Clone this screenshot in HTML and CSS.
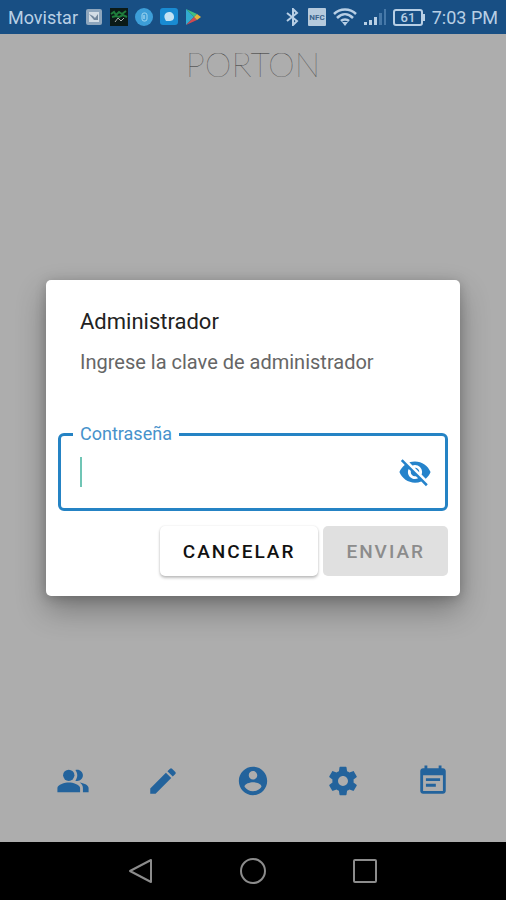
FILE: index.html
```html
<!DOCTYPE html>
<html lang="es">
<head>
  <meta charset="UTF-8" />
  <meta name="viewport" content="width=device-width, initial-scale=1.0" />
  <title>Porton</title>
  <link rel="stylesheet" href="styles.css">
</head>
<body>
  <header class="status-bar">
    <div class="status-left">
      <span>Movistar</span>
      <svg width="18" height="18" viewBox="0 0 18 18" aria-hidden="true">
        <rect x="1" y="1" width="16" height="16" rx="2" fill="#8ea6bd"/>
        <rect x="4" y="4" width="10" height="10" fill="#d3dde6"/>
        <path d="M4 6l4 2 2 2 3-4v6H9z" fill="#71879d"/>
      </svg>
      <svg width="18" height="18" viewBox="0 0 18 18" aria-hidden="true">
        <rect width="18" height="18" fill="#0b1a17"/>
        <path d="M1 6l3-2 2 3 3-3 3 2 4-3M2 9l4-1 3 1 4-2 4 2" fill="none" stroke="#1f7d3b" stroke-width="2"/>
        <path d="M5 14l3-4 3 3 3-3" fill="none" stroke="#a9adaa" stroke-width="1"/>
      </svg>
      <svg width="18" height="18" viewBox="0 0 18 18" aria-hidden="true">
        <circle cx="9" cy="9" r="9" fill="#3d9ed8"/>
        <rect x="7" y="5" width="5" height="8" rx="2" fill="none" stroke="#9ed5ef" stroke-width="1"/>
        <path d="M9 7v4" stroke="#c5e6f5"/>
      </svg>
      <svg width="18" height="18" viewBox="0 0 18 18" aria-hidden="true">
        <rect width="18" height="17" rx="3" fill="#198bd2"/>
        <path d="M9 4c3 0 5 2 5 5s-2 4-5 4H6l-1-2c-2-4 1-7 4-7z" fill="#c3e3f4"/>
      </svg>
      <svg width="18" height="18" viewBox="0 0 18 18" aria-hidden="true">
        <path d="M1 1v16l8-8z" fill="#32acd0"/>
        <path d="M1 1l8 8 3-3z" fill="#3fbf83"/>
        <path d="M1 17l8-8 3 3z" fill="#cf4a50"/>
        <path d="M12 6l4 3-4 3-3-3z" fill="#e2b43c"/>
      </svg>
    </div>
    <div class="status-right">
      <svg width="16" height="18" viewBox="0 0 16 18" aria-hidden="true">
        <path d="M2 5l10 8-4 4V1l4 4-10 8" fill="none" stroke="currentColor" stroke-width="2"/>
      </svg>
      <svg width="18" height="18" viewBox="0 0 18 18" aria-hidden="true">
        <rect width="18" height="18" rx="1" fill="#b5cadd"/>
        <text x="9" y="12" text-anchor="middle" class="nfc-text">NFC</text>
      </svg>
      <svg width="24" height="18" viewBox="0 0 24 18" aria-hidden="true">
        <path d="M1 6c6-6 16-6 22 0M4 10c5-5 11-5 16 0M8 13c2-2 6-2 8 0" fill="none" stroke="currentColor" stroke-width="2.500"/>
        <path d="M9 14h6l-3 4z" fill="currentColor"/>
      </svg>
      <svg width="22" height="18" viewBox="0 0 22 18" aria-hidden="true">
        <path d="M0 14h3v3H0zM5 12h3v5H5zM10 9h3v8h-3z" fill="currentColor"/>
        <path d="M15 5h3v12h-3zM20 1h2v16h-2z" fill="#4678a8"/>
      </svg>
      <svg width="32" height="18" viewBox="0 0 32 18" aria-hidden="true">
        <rect x="1" y="2" width="28" height="15" rx="2" fill="none" stroke="currentColor" stroke-width="2"/>
        <path d="M30 6h2v7h-2z" fill="currentColor"/>
        <text x="15" y="14" text-anchor="middle" class="battery-text">61</text>
      </svg>
      <span>7:03 PM</span>
    </div>
  </header>

  <main class="app">
    <h1 class="app-title">PORTON</h1>

    <nav class="tabs">
      <a href="#usuarios" aria-label="Usuarios">
        <svg viewBox="0 0 24 24">
          <path d="M16.67 13.13C18.04 14.06 19 15.32 19 17v3h4v-3c0-2.18-3.57-3.47-6.33-3.87z"/>
          <circle cx="9" cy="8" r="4"/>
          <path d="M15 12c2.21 0 4-1.79 4-4s-1.79-4-4-4c-.47 0-.91.1-1.33.24C14.5 5.27 15 6.58 15 8s-.5 2.73-1.33 3.76c.42.14.86.24 1.33.24zM9 13c-2.67 0-8 1.34-8 4v3h16v-3c0-2.66-5.33-4-8-4z"/>
        </svg>
      </a>
      <a href="#editar" aria-label="Editar">
        <svg viewBox="0 0 24 24">
          <path d="M3 17.25V21h3.75L17.81 9.94l-3.75-3.75L3 17.25zM20.71 7.04a1 1 0 0 0 0-1.41l-2.34-2.34a1 1 0 0 0-1.41 0l-1.83 1.83 3.75 3.75 1.83-1.83z"/>
        </svg>
      </a>
      <a href="#cuenta" aria-label="Cuenta">
        <svg viewBox="0 0 24 24">
          <path d="M12 2C6.48 2 2 6.48 2 12s4.48 10 10 10 10-4.48 10-10S17.52 2 12 2zm0 3c1.66 0 3 1.34 3 3s-1.34 3-3 3-3-1.34-3-3 1.34-3 3-3zm0 14.2c-2.5 0-4.71-1.28-6-3.22.03-1.99 4-3.08 6-3.08 1.99 0 5.97 1.09 6 3.08-1.29 1.94-3.5 3.22-6 3.22z"/>
        </svg>
      </a>
      <a href="#ajustes" aria-label="Ajustes">
        <svg viewBox="0 0 24 24">
          <path d="M19.43 12.98c.04-.32.07-.64.07-.98s-.03-.66-.07-.98l2.11-1.65c.19-.15.24-.42.12-.64l-2-3.46c-.12-.22-.39-.3-.61-.22l-2.49 1c-.52-.4-1.08-.73-1.69-.98l-.38-2.65C14.46 2.18 14.25 2 14 2h-4c-.25 0-.46.18-.49.42l-.38 2.65c-.61.25-1.17.59-1.69.98l-2.49-1c-.23-.09-.49 0-.61.22l-2 3.46c-.13.22-.07.49.12.64l2.11 1.65c-.04.32-.07.65-.07.98s.03.66.07.98l-2.11 1.65c-.19.15-.24.42-.12.64l2 3.46c.12.22.39.3.61.22l2.49-1c.52.4 1.08.73 1.69.98l.38 2.65c.03.24.24.42.49.42h4c.25 0 .46-.18.49-.42l.38-2.65c.61-.25 1.17-.59 1.69-.98l2.49 1c.23.09.49 0 .61-.22l2-3.46c.12-.22.07-.49-.12-.64l-2.11-1.65zM12 15.5c-1.93 0-3.5-1.57-3.5-3.5s1.57-3.5 3.5-3.5 3.5 1.57 3.5 3.5-1.57 3.5-3.5 3.5z"/>
        </svg>
      </a>
      <a href="#eventos" aria-label="Eventos">
        <svg viewBox="0 0 24 24">
          <path d="M17 10H7v2h10v-2zm2-7h-1V1h-2v2H8V1H6v2H5c-1.110 0-1.990.9-1.990 2L3 19c0 1.100.89 2 2 2h14c1.100 0 2-.9 2-2V5c0-1.100-.9-2-2-2zm0 16H5V8h14v11zm-5-5H7v2h7v-2z"/>
        </svg>
      </a>
    </nav>

    <div class="overlay">
      <form class="dialog" role="dialog" aria-labelledby="dialogTitle">
        <h2 id="dialogTitle">Administrador</h2>
        <p>Ingrese la clave de administrador</p>
        <fieldset class="field">
          <legend><label for="password">Contraseña</label></legend>
          <div class="field-row">
            <span class="caret"></span>
            <input type="password" id="password" autocomplete="off" />
            <button type="button" class="toggle" aria-label="Mostrar contraseña">
              <svg viewBox="0 0 24 24">
                <path d="M12 7c2.760 0 5 2.240 5 5 0 .65-.13 1.260-.36 1.830l2.920 2.920c1.510-1.260 2.700-2.890 3.430-4.750-1.730-4.390-6-7.500-11-7.500-1.400 0-2.740.25-3.980.7l2.160 2.160C10.740 7.130 11.350 7 12 7zM2 4.270l2.280 2.280.46.46C3.080 8.300 1.780 10.020 1 12c1.730 4.390 6 7.500 11 7.500 1.550 0 3.030-.3 4.380-.84l.42.42L19.730 22 21 20.730 3.270 3 2 4.270zM7.530 9.800l1.550 1.550c-.05.21-.08.43-.08.65 0 1.660 1.340 3 3 3 .22 0 .44-.03.65-.08l1.550 1.550c-.67.33-1.410.53-2.200.53-2.760 0-5-2.240-5-5 0-.79.2-1.530.53-2.200zm4.310-.78l3.150 3.150.02-.16c0-1.660-1.340-3-3-3l-.17.01z"/>
              </svg>
            </button>
          </div>
        </fieldset>
        <div class="actions">
          <button type="button" class="button">CANCELAR</button>
          <button type="submit" class="button" disabled>ENVIAR</button>
        </div>
      </form>
    </div>
  </main>

  <footer class="system-nav">
    <button type="button" aria-label="Atrás">
      <svg viewBox="0 0 28 28"><path d="M24 3v22L3 14z" stroke-linejoin="round"/></svg>
    </button>
    <button type="button" aria-label="Inicio">
      <svg viewBox="0 0 28 28"><circle cx="14" cy="14" r="12"/></svg>
    </button>
    <button type="button" aria-label="Recientes">
      <svg viewBox="0 0 28 28"><rect x="3" y="3" width="22" height="22" rx="1"/></svg>
    </button>
  </footer>
</body>
</html>
```
FILE: styles.css
```css
* {
  box-sizing: border-box;
}
body {
  margin: 0;
  min-height: 100vh;
  display: flex;
  flex-direction: column;
  font-family: Roboto, sans-serif;
  background-color: #adadad;
}
svg {
  display: block;
}
.status-bar {
  display: flex;
  align-items: center;
  justify-content: space-between;
  height: 34px;
  padding: 0 8px;
  background-color: #184f84;
  color: #b8cfe5;
  font-size: 18px;
}
.status-left,
.status-right {
  display: flex;
  align-items: center;
  gap: 7px;
}
.nfc-text {
  font-size: 8px;
  font-weight: 700;
  fill: #3c648c;
}
.battery-text {
  font-size: 13px;
  font-weight: 500;
  fill: currentColor;
}
.app {
  position: relative;
  flex: 1;
  display: flex;
  flex-direction: column;
  justify-content: space-between;
}
.app-title {
  margin: 10px 0 0;
  font-family: Lato, sans-serif;
  font-size: 34px;
  font-weight: 100;
  line-height: 40px;
  text-align: center;
  color: #333333;
}
.tabs {
  display: flex;
  padding: 0 28px 44px;
}
.tabs a {
  flex: 1;
  display: flex;
  justify-content: center;
}
.tabs svg {
  width: 34px;
  height: 34px;
  fill: #23639c;
}
.overlay {
  position: absolute;
  inset: 0;
  display: flex;
  align-items: center;
  justify-content: center;
  padding: 0 46px;
}
.dialog {
  flex: 1;
  max-width: 560px;
  padding: 28px 12px 20px;
  background-color: #ffffff;
  border-radius: 5px;
  box-shadow: 0 14px 30px rgba(0, 0, 0, 0.3), 0 2px 12px rgba(0, 0, 0, 0.2);
}
.dialog h2 {
  margin: 0 22px;
  font-size: 22px;
  font-weight: 400;
  line-height: 28px;
  color: #222222;
}
.dialog p {
  margin: 12px 22px 48px;
  font-size: 20px;
  line-height: 28px;
  color: #666666;
}
.field {
  min-width: 0;
  margin: 0 0 15px;
  padding: 0 13px 0 12px;
  border: 3px solid #2583c4;
  border-radius: 6px;
}
.field legend {
  padding: 0 7px;
  font-size: 18px;
  line-height: 20px;
  color: #4792cb;
}
.field-row {
  display: flex;
  align-items: center;
  height: 64px;
  padding: 0 0 8px 7px;
}
.caret {
  width: 2px;
  height: 30px;
  background-color: #70c5b5;
}
.field input {
  flex: 1;
  min-width: 0;
  height: 40px;
  border: none;
  outline: none;
  background: none;
  font-size: 20px;
}
.toggle {
  padding: 0;
  border: none;
  background: none;
  cursor: pointer;
}
.toggle svg {
  width: 34px;
  height: 34px;
  fill: #2583cb;
}
.actions {
  display: flex;
  justify-content: flex-end;
  gap: 5px;
}
.button {
  height: 50px;
  padding: 0 23px;
  border: none;
  border-radius: 5px;
  background-color: #ffffff;
  color: #111111;
  font-family: inherit;
  font-size: 19px;
  font-weight: 500;
  letter-spacing: 2px;
  box-shadow: 0 2px 3px rgba(0, 0, 0, 0.25), 0 0 2px rgba(0, 0, 0, 0.1);
  cursor: pointer;
}
.button:disabled {
  background-color: #e0e0e0;
  color: #8c8c8c;
  box-shadow: none;
}
.system-nav {
  display: flex;
  align-items: center;
  justify-content: center;
  gap: 84px;
  height: 58px;
  background-color: #000000;
}
.system-nav button {
  padding: 0;
  border: none;
  background: none;
}
.system-nav svg {
  width: 28px;
  height: 28px;
  fill: none;
  stroke: #8c8c8c;
  stroke-width: 2;
}
```
